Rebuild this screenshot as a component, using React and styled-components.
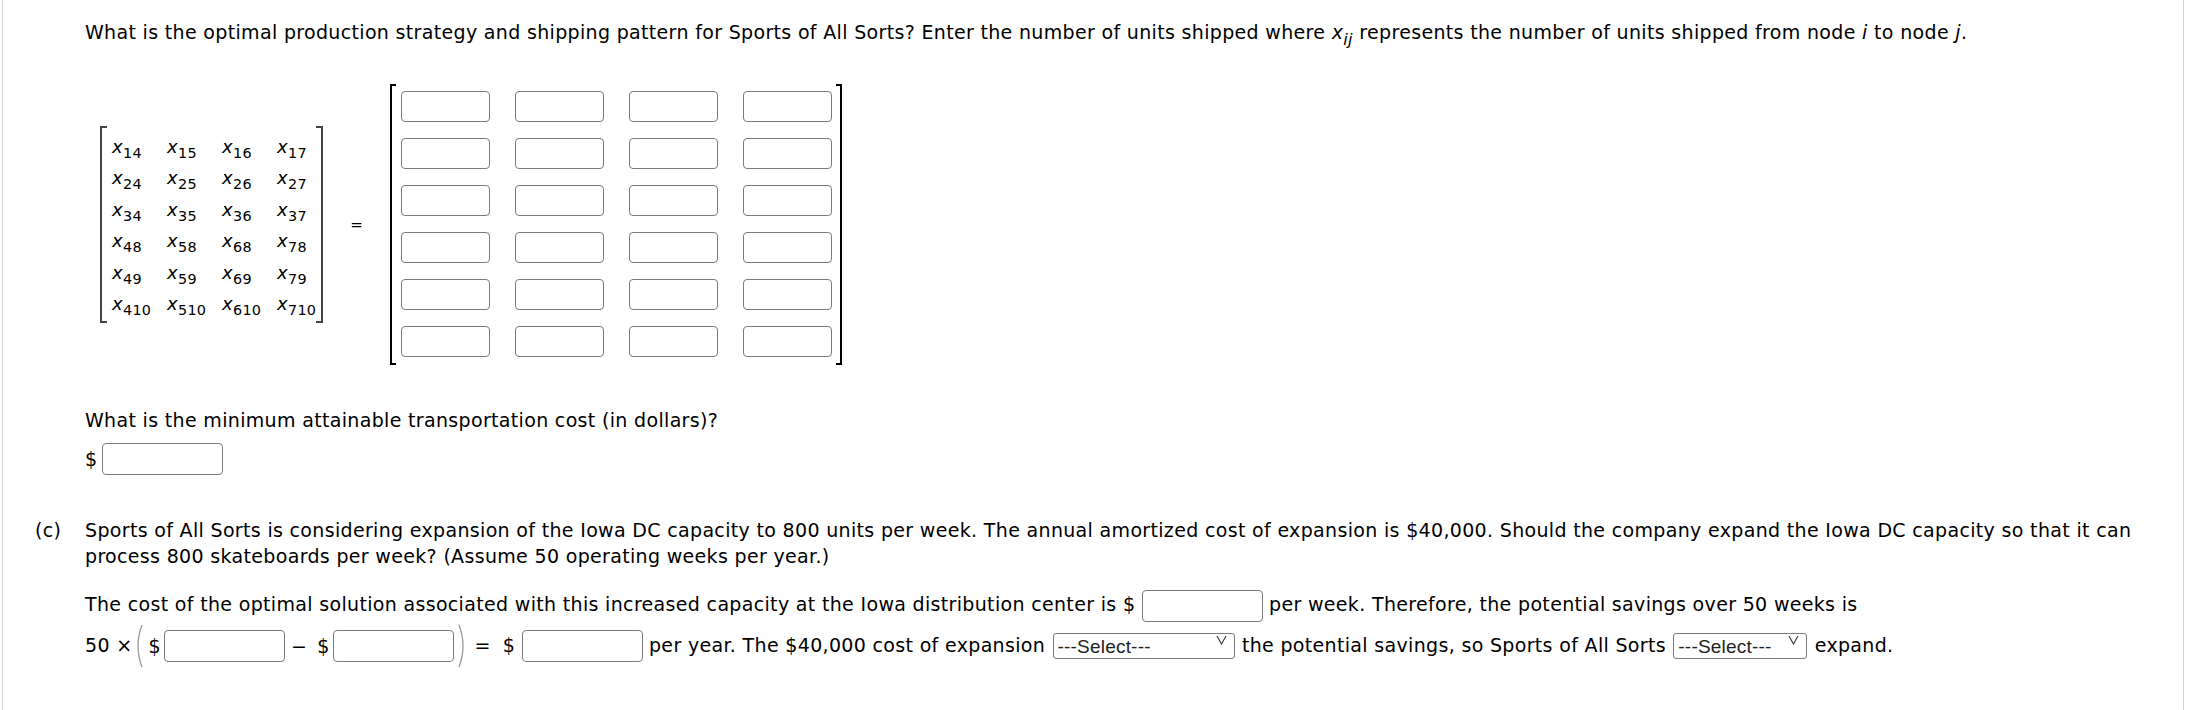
import React from "react";
import styled, { createGlobalStyle } from "styled-components";

const GlobalStyle = createGlobalStyle`
  html, body {
    margin: 0;
    padding: 0;
    background: #fff;
  }
  body {
    font-family: "DejaVu Sans", Verdana, sans-serif;
    font-size: 19px;
    letter-spacing: 0.33px;
    color: #000;
  }
`;

const Page = styled.div`
  box-sizing: border-box;
  min-height: 710px;
  margin: 0 2px;
  padding: 19px 40px 0 32px;
  border-left: 1px solid #d3d3d3;
  border-right: 1px solid #d3d3d3;
`;

const Part = styled.section`
  display: grid;
  grid-template-columns: 50px 1fr;
  margin-top: ${(p) => p.$gap || 0}px;
`;

const Label = styled.div`
  line-height: 26px;
`;

const Para = styled.p`
  margin: ${(p) => p.$top || 0}px 0 0;
  line-height: ${(p) => p.$lh || 26}px;
`;

const Sub = styled.sub`
  font-size: ${(p) => p.$size || 0.8}em;
  vertical-align: -0.35em;
  line-height: 0;
`;

const MatrixRow = styled.div`
  display: flex;
  align-items: center;
  margin: 39px 0 0 15px;
`;

const Bracketed = styled.div`
  position: relative;
  padding: ${(p) => p.$pad};

  &::before,
  &::after {
    content: "";
    position: absolute;
    top: 0;
    bottom: 0;
    width: ${(p) => p.$tick}px;
    border: ${(p) => p.$w}px solid ${(p) => p.$color};
  }
  &::before {
    left: 0;
    border-right: none;
  }
  &::after {
    right: 0;
    border-left: none;
  }
`;

const VarGrid = styled.div`
  display: grid;
  grid-template-columns: repeat(3, 55px) auto;
  grid-auto-rows: 31.6px;
  align-items: center;
  font-size: 18px;
  letter-spacing: 0.3px;
`;

const Var = styled.span`
  white-space: nowrap;
  i {
    font-style: italic;
  }
`;

const Equals = styled.span`
  margin: 0 27px 0 27px;
  font-size: 15px;
`;

const BoxGrid = styled.div`
  display: grid;
  grid-template-columns: repeat(4, 89px);
  column-gap: 25px;
  row-gap: 16px;
`;

const Box = styled.input`
  box-sizing: border-box;
  width: ${(p) => p.$w || 89}px;
  height: ${(p) => p.$h || 31}px;
  margin: 0;
  padding: 0 6px;
  border: 1px solid #7b7b7b;
  border-radius: 4px;
  background: #fff;
  font: inherit;
  vertical-align: middle;
`;

const DollarRow = styled.div`
  display: flex;
  align-items: center;
  gap: 5px;
  margin-top: 10px;
`;

const ParenGroup = styled.span`
  display: inline-flex;
  align-items: center;
  vertical-align: middle;
  margin-left: 2px;
`;

const Paren = styled.svg`
  width: 10px;
  height: 44px;
  margin: ${(p) => (p.$right ? "0 0 0 3px" : "0 4px 0 0")};
  flex: none;
`;

const Gap = styled.span`
  display: inline-block;
  width: ${(p) => p.$w}px;
`;

const SelectWrap = styled.span`
  position: relative;
  display: inline-block;
  vertical-align: middle;
  margin: 0 1px;
`;

const Select = styled.select`
  appearance: none;
  -webkit-appearance: none;
  box-sizing: border-box;
  width: ${(p) => p.$w}px;
  height: 26px;
  margin: 0;
  padding: 0 22px 0 4px;
  border: 1px solid #7b7b7b;
  border-radius: 3px;
  background: #fff;
  color: #222;
  font-family: "Liberation Sans", Arial, sans-serif;
  font-size: 19px;
  letter-spacing: 0.2px;
`;

const Chevron = styled.svg`
  position: absolute;
  right: 8px;
  top: 8px;
  width: 11px;
  height: 10px;
  pointer-events: none;
`;

function SelectBox({ w }) {
  return (
    <SelectWrap>
      <Select $w={w} defaultValue="">
        <option value="">---Select---</option>
      </Select>
      <Chevron viewBox="0 0 11 10">
        <path d="M1 1 L5.5 9 L10 1" fill="none" stroke="#333" strokeWidth="1.1" />
      </Chevron>
    </SelectWrap>
  );
}

function LeftParen() {
  return (
    <Paren viewBox="0 0 10 44">
      <path d="M8 1 Q0 22 8 43" fill="none" stroke="#999" strokeWidth="1.3" />
    </Paren>
  );
}

function RightParen() {
  return (
    <Paren $right viewBox="0 0 10 44">
      <path d="M2 1 Q10 22 2 43" fill="none" stroke="#999" strokeWidth="1.3" />
    </Paren>
  );
}

const vars = [
  ["14", "15", "16", "17"],
  ["24", "25", "26", "27"],
  ["34", "35", "36", "37"],
  ["48", "58", "68", "78"],
  ["49", "59", "69", "79"],
  ["410", "510", "610", "710"],
];

export default function App() {
  return (
    <>
      <GlobalStyle />
      <Page>
        <Part>
          <Label />
          <div>
            <Para>
              What is the optimal production strategy and shipping pattern for Sports of All
              Sorts? Enter the number of units shipped where <i>x</i>
              <Sub $size={0.85}>
                <i>ij</i>
              </Sub>{" "}
              represents the number of units shipped from node <i>i</i> to node <i>j</i>.
            </Para>

            <MatrixRow>
              <Bracketed $pad="4px 7px 3px 12px" $tick={5} $w={2} $color="#444">
                <VarGrid>
                  {vars.flat().map((s) => (
                    <Var key={s}>
                      <i>x</i>
                      <Sub>{s}</Sub>
                    </Var>
                  ))}
                </VarGrid>
              </Bracketed>
              <Equals>=</Equals>
              <Bracketed $pad="7px 10px 8px 11px" $tick={4} $w={2} $color="#000">
                <BoxGrid>
                  {vars.flat().map((s) => (
                    <Box key={s} type="text" aria-label={"x" + s} />
                  ))}
                </BoxGrid>
              </Bracketed>
            </MatrixRow>

            <Para $top={42}>What is the minimum attainable transportation cost (in dollars)?</Para>
            <DollarRow>
              <span>$</span>
              <Box type="text" $w={121} $h={32} />
            </DollarRow>
          </div>
        </Part>

        <Part $gap={42}>
          <Label>(c)</Label>
          <div>
            <Para>
              Sports of All Sorts is considering expansion of the Iowa DC capacity to 800 units
              per week. The annual amortized cost of expansion is $40,000. Should the company
              expand the Iowa DC capacity so that it can process 800 skateboards per week?
              (Assume 50 operating weeks per year.)
            </Para>
            <Para $top={16} $lh={39}>
              The cost of the optimal solution associated with this increased capacity at the
              Iowa distribution center is $ <Box type="text" $w={121} $h={32} /> per week.
              Therefore, the potential savings over 50 weeks is
              <br />
              50 ×
              <ParenGroup>
                <LeftParen />$<Gap $w={3} />
                <Box type="text" $w={121} $h={32} />
                <Gap $w={6} />−<Gap $w={10} />$<Gap $w={3} />
                <Box type="text" $w={121} $h={32} />
                <RightParen />
              </ParenGroup>
              <Gap $w={8} />=<Gap $w={12} />$ <Box type="text" $w={121} $h={32} /> per year. The
              $40,000 cost of expansion <SelectBox w={182} /> the potential savings, so Sports of
              All Sorts <SelectBox w={134} /> expand.
            </Para>
          </div>
        </Part>
      </Page>
    </>
  );
}
